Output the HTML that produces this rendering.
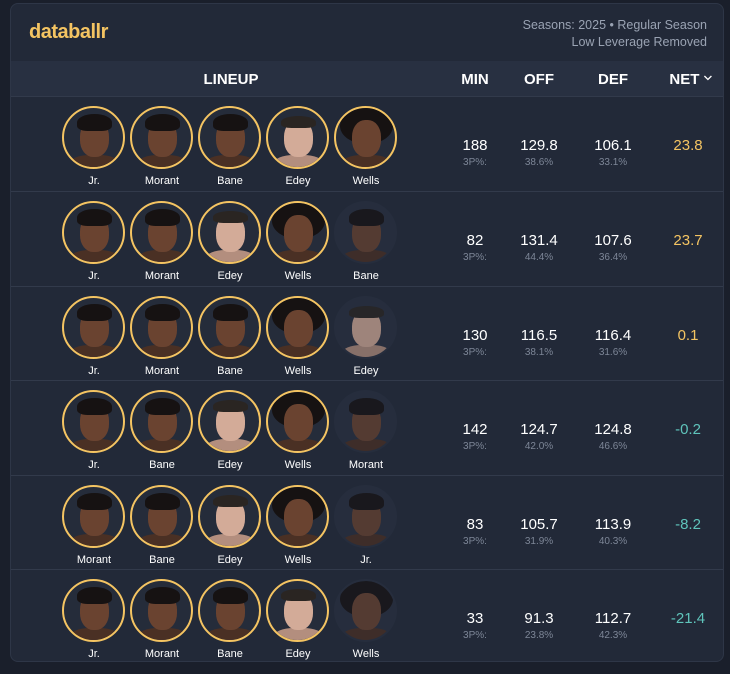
<!DOCTYPE html>
<html><head><meta charset="utf-8"><style>
*{margin:0;padding:0;box-sizing:border-box}
body{width:730px;height:674px;background:#1a1f2b;font-family:"Liberation Sans",sans-serif;position:relative;overflow:hidden}
.card{position:absolute;left:10px;top:3px;width:714px;height:659px;background:#222938;border:1px solid #2e3647;border-radius:8px;overflow:hidden}
.logo{position:absolute;left:18px;top:17px;color:#f4c462;font-weight:bold;font-size:20px;letter-spacing:-0.5px}
.meta{position:absolute;right:16px;top:13px;text-align:right;color:#9aa3b3;font-size:12.5px;line-height:17px}
.hdr{position:absolute;left:0;top:57px;width:714px;height:35px;background:#283041;color:#fff;font-weight:bold;font-size:15px}
.hdr .h{position:absolute;top:10px;transform:translateX(-50%);white-space:nowrap}
.row{position:absolute;left:0;width:714px;height:95px;border-top:1px solid #323a4b}
.av{position:absolute;top:9px;width:63px;height:63px;border-radius:50%;border:2px solid #f4c462;background:#252c3a;overflow:hidden}
.av.off{border-color:transparent;background:#283040;opacity:.7}
.head{position:absolute;left:16px;top:12px;width:29px;height:37px;border-radius:45%;background:#6a4330}
.hair{position:absolute;left:13px;top:6px;width:35px;height:17px;border-radius:50% 50% 30% 30%;background:#161212}
.body{position:absolute;left:6px;top:47px;width:49px;height:20px;border-radius:40% 40% 0 0;background:#4a3024}
.lt .head{background:#d3ab98}.lt .body{background:#b38e7e}.lt .hair{height:12px;top:8px;background:#2a2522}
.afro .hair{left:4px;top:0;width:53px;height:36px;border-radius:50%}
.nm{position:absolute;top:78px;width:80px;text-align:center;transform:translateX(-50%);color:#fff;font-size:11px}
.st{position:absolute;top:40px;transform:translateX(-50%);text-align:center;color:#fff;font-size:15px}
.st small{display:block;color:#7d8697;font-size:10px;margin-top:3px}
.g{color:#f4c462}.t{color:#5fc4bb}
</style></head><body>
<div class="card">
<div class="logo">databallr</div>
<div class="meta">Seasons: 2025 • Regular Season<br>Low Leverage Removed</div>
<div class="hdr"><span class="h" style="left:220px">LINEUP</span><span class="h" style="left:464px">MIN</span><span class="h" style="left:528px">OFF</span><span class="h" style="left:602px">DEF</span><span class="h" style="left:680px">NET <svg width="9" height="6" viewBox="0 0 9 6" style="vertical-align:3px"><path d="M1 1l3.5 3.5L8 1" stroke="#fff" stroke-width="1.3" fill="none"/></svg></span></div>

<div class="row" style="top:92px">
<div class="av" style="left:51px"><div class="body"></div><div class="head"></div><div class="hair"></div></div>
<div class="av" style="left:119px"><div class="body"></div><div class="head"></div><div class="hair"></div></div>
<div class="av" style="left:187px"><div class="body"></div><div class="head"></div><div class="hair"></div></div>
<div class="av lt" style="left:255px"><div class="body"></div><div class="head"></div><div class="hair"></div></div>
<div class="av afro" style="left:323px"><div class="body"></div><div class="hair"></div><div class="head"></div></div>
<div class="nm" style="left:83px">Jr.</div><div class="nm" style="left:151px">Morant</div><div class="nm" style="left:219px">Bane</div><div class="nm" style="left:287px">Edey</div><div class="nm" style="left:355px">Wells</div>
<div class="st" style="left:464px">188<small>3P%:</small></div><div class="st" style="left:528px">129.8<small>38.6%</small></div><div class="st" style="left:602px">106.1<small>33.1%</small></div><div class="st g" style="left:677px">23.8</div>
</div>

<div class="row" style="top:187px">
<div class="av" style="left:51px"><div class="body"></div><div class="head"></div><div class="hair"></div></div>
<div class="av" style="left:119px"><div class="body"></div><div class="head"></div><div class="hair"></div></div>
<div class="av lt" style="left:187px"><div class="body"></div><div class="head"></div><div class="hair"></div></div>
<div class="av afro" style="left:255px"><div class="body"></div><div class="hair"></div><div class="head"></div></div>
<div class="av off" style="left:323px"><div class="body"></div><div class="head"></div><div class="hair"></div></div>
<div class="nm" style="left:83px">Jr.</div><div class="nm" style="left:151px">Morant</div><div class="nm" style="left:219px">Edey</div><div class="nm" style="left:287px">Wells</div><div class="nm" style="left:355px">Bane</div>
<div class="st" style="left:464px">82<small>3P%:</small></div><div class="st" style="left:528px">131.4<small>44.4%</small></div><div class="st" style="left:602px">107.6<small>36.4%</small></div><div class="st g" style="left:677px">23.7</div>
</div>

<div class="row" style="top:282px">
<div class="av" style="left:51px"><div class="body"></div><div class="head"></div><div class="hair"></div></div>
<div class="av" style="left:119px"><div class="body"></div><div class="head"></div><div class="hair"></div></div>
<div class="av" style="left:187px"><div class="body"></div><div class="head"></div><div class="hair"></div></div>
<div class="av afro" style="left:255px"><div class="body"></div><div class="hair"></div><div class="head"></div></div>
<div class="av off lt" style="left:323px"><div class="body"></div><div class="head"></div><div class="hair"></div></div>
<div class="nm" style="left:83px">Jr.</div><div class="nm" style="left:151px">Morant</div><div class="nm" style="left:219px">Bane</div><div class="nm" style="left:287px">Wells</div><div class="nm" style="left:355px">Edey</div>
<div class="st" style="left:464px">130<small>3P%:</small></div><div class="st" style="left:528px">116.5<small>38.1%</small></div><div class="st" style="left:602px">116.4<small>31.6%</small></div><div class="st g" style="left:677px">0.1</div>
</div>

<div class="row" style="top:376px">
<div class="av" style="left:51px"><div class="body"></div><div class="head"></div><div class="hair"></div></div>
<div class="av" style="left:119px"><div class="body"></div><div class="head"></div><div class="hair"></div></div>
<div class="av lt" style="left:187px"><div class="body"></div><div class="head"></div><div class="hair"></div></div>
<div class="av afro" style="left:255px"><div class="body"></div><div class="hair"></div><div class="head"></div></div>
<div class="av off" style="left:323px"><div class="body"></div><div class="head"></div><div class="hair"></div></div>
<div class="nm" style="left:83px">Jr.</div><div class="nm" style="left:151px">Bane</div><div class="nm" style="left:219px">Edey</div><div class="nm" style="left:287px">Wells</div><div class="nm" style="left:355px">Morant</div>
<div class="st" style="left:464px">142<small>3P%:</small></div><div class="st" style="left:528px">124.7<small>42.0%</small></div><div class="st" style="left:602px">124.8<small>46.6%</small></div><div class="st t" style="left:677px">-0.2</div>
</div>

<div class="row" style="top:471px">
<div class="av" style="left:51px"><div class="body"></div><div class="head"></div><div class="hair"></div></div>
<div class="av" style="left:119px"><div class="body"></div><div class="head"></div><div class="hair"></div></div>
<div class="av lt" style="left:187px"><div class="body"></div><div class="head"></div><div class="hair"></div></div>
<div class="av afro" style="left:255px"><div class="body"></div><div class="hair"></div><div class="head"></div></div>
<div class="av off" style="left:323px"><div class="body"></div><div class="head"></div><div class="hair"></div></div>
<div class="nm" style="left:83px">Morant</div><div class="nm" style="left:151px">Bane</div><div class="nm" style="left:219px">Edey</div><div class="nm" style="left:287px">Wells</div><div class="nm" style="left:355px">Jr.</div>
<div class="st" style="left:464px">83<small>3P%:</small></div><div class="st" style="left:528px">105.7<small>31.9%</small></div><div class="st" style="left:602px">113.9<small>40.3%</small></div><div class="st t" style="left:677px">-8.2</div>
</div>

<div class="row" style="top:565px">
<div class="av" style="left:51px"><div class="body"></div><div class="head"></div><div class="hair"></div></div>
<div class="av" style="left:119px"><div class="body"></div><div class="head"></div><div class="hair"></div></div>
<div class="av" style="left:187px"><div class="body"></div><div class="head"></div><div class="hair"></div></div>
<div class="av lt" style="left:255px"><div class="body"></div><div class="head"></div><div class="hair"></div></div>
<div class="av off afro" style="left:323px"><div class="body"></div><div class="hair"></div><div class="head"></div></div>
<div class="nm" style="left:83px">Jr.</div><div class="nm" style="left:151px">Morant</div><div class="nm" style="left:219px">Bane</div><div class="nm" style="left:287px">Edey</div><div class="nm" style="left:355px">Wells</div>
<div class="st" style="left:464px">33<small>3P%:</small></div><div class="st" style="left:528px">91.3<small>23.8%</small></div><div class="st" style="left:602px">112.7<small>42.3%</small></div><div class="st t" style="left:677px">-21.4</div>
</div>
</div>
</body></html>
